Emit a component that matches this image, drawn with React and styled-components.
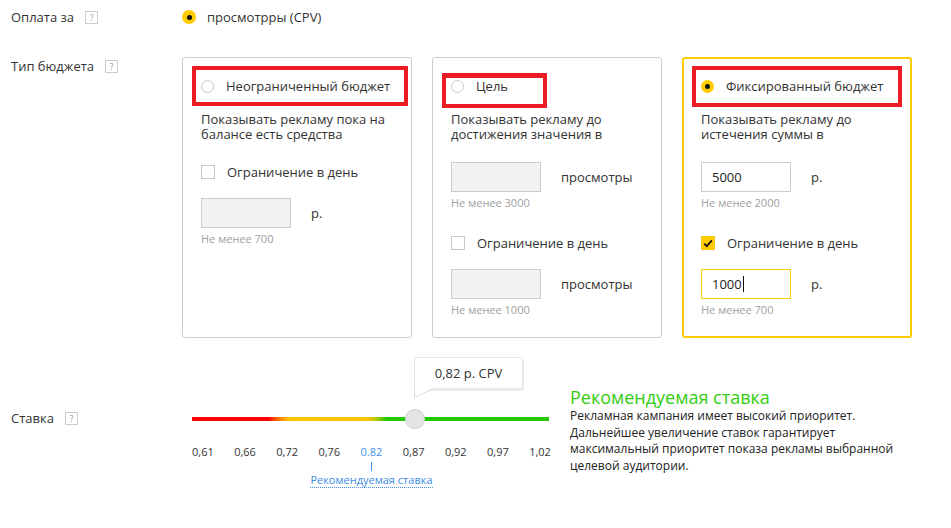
import React from 'react';
import styled, { createGlobalStyle } from 'styled-components';

const Global = createGlobalStyle`
  html, body { margin: 0; padding: 0; background: #fff; }
  body {
    font-family: "Open Sans", "Liberation Sans", sans-serif;
    font-size: 13px;
    color: #333;
  }
`;

const Page = styled.div`
  width: 951px;
  height: 528px;
  box-sizing: border-box;
  padding: 8px 0 0 11px;
  display: flex;
  flex-direction: column;
  overflow: hidden;
`;

const Row = styled.div`
  display: flex;
  align-items: flex-start;
  margin-top: ${p => p.$mt || 0}px;
`;

const LabelCell = styled.div`
  width: 171px;
  flex: none;
  display: flex;
  align-items: center;
  height: 18px;
  line-height: 18px;
  margin-top: ${p => p.$mt || 0}px;
`;

const HelpBox = styled.span`
  margin-left: 11px;
  width: 13px;
  height: 13px;
  box-sizing: border-box;
  border: 1px solid #ccc;
  display: inline-flex;
  align-items: center;
  justify-content: center;
  font-size: 9px;
  color: #999;
  line-height: 1;
`;

const OptionLine = styled.label`
  display: flex;
  align-items: center;
  height: 18px;
  gap: ${p => p.$gap || 12}px;
  line-height: 18px;
  white-space: nowrap;
`;

const Radio = styled.span`
  width: ${p => p.$size || 13}px;
  height: ${p => p.$size || 13}px;
  box-sizing: border-box;
  border-radius: 50%;
  flex: none;
  display: inline-flex;
  align-items: center;
  justify-content: center;
  background: ${p => (p.$checked ? '#ffcc00' : '#fff')};
  border: ${p => (p.$checked ? 'none' : '1px solid #c8c8c8')};
  &::after {
    content: '';
    display: ${p => (p.$checked ? 'block' : 'none')};
    width: 5px;
    height: 5px;
    border-radius: 50%;
    background: #111;
  }
`;

const Cards = styled.div`
  display: flex;
  gap: 20px;
`;

const Card = styled.div`
  position: relative;
  width: 230px;
  height: 281px;
  box-sizing: border-box;
  border-radius: 3px;
  border: ${p => (p.$active ? '2px solid #ffcc00' : '1px solid #ccc')};
  padding: ${p => (p.$active ? '18px 17px' : '19px 18px')};
  display: flex;
  flex-direction: column;
  align-items: flex-start;
`;

const Annotation = styled.div`
  position: absolute;
  left: ${p => p.$l}px;
  top: ${p => p.$t}px;
  width: ${p => p.$w}px;
  height: ${p => p.$h}px;
  box-sizing: border-box;
  border: 4px solid #ec1c24;
  border-top-width: ${p => p.$bt || 4}px;
  pointer-events: none;
`;

const Desc = styled.div`
  margin-top: 17px;
  line-height: 15px;
  white-space: nowrap;
`;

const CheckLine = styled(OptionLine)`
  margin-top: ${p => p.$mt}px;
`;

const Checkbox = styled.span`
  width: 14px;
  height: 14px;
  box-sizing: border-box;
  flex: none;
  display: inline-flex;
  align-items: center;
  justify-content: center;
  background: ${p => (p.$checked ? '#ffcc00' : '#fff')};
  border: ${p => (p.$checked ? 'none' : '1px solid #c8c8c8')};
`;

const InputRow = styled.div`
  margin-top: ${p => p.$mt}px;
  display: flex;
  align-items: center;
  gap: 20px;
`;

const Field = styled.div`
  width: 90px;
  height: 30px;
  box-sizing: border-box;
  border: 1px solid ${p => (p.$focus ? '#ffcc00' : '#ccc')};
  background: ${p => (p.$disabled ? '#f2f2f2' : '#fff')};
  padding-left: 10px;
  display: flex;
  align-items: center;
  color: #222;
`;

const Caret = styled.span`
  display: inline-block;
  width: 1px;
  height: 16px;
  background: #111;
  margin-left: 1px;
`;

const Unit = styled.span`
  line-height: 18px;
`;

const Hint = styled.div`
  margin-top: 4px;
  font-size: 11px;
  line-height: 14px;
  color: #a0a0a0;
`;

const SliderBlock = styled.div`
  position: relative;
  margin-left: 10px;
  width: 359px;
  padding-top: 52px;
  flex: none;
`;

const Tooltip = styled.div`
  position: absolute;
  left: 222px;
  top: 0;
  width: 109px;
  height: 32px;
  box-sizing: border-box;
  background: #fff;
  border: 1px solid #e6e6e6;
  border-radius: 3px;
  border-bottom-left-radius: 0;
  box-shadow: 1px 2px 0 #ececec;
  display: flex;
  align-items: center;
  justify-content: center;
  color: #333;
`;

const TooltipTail = styled.svg`
  position: absolute;
  left: -1px;
  top: 30px;
  overflow: visible;
`;

const TrackWrap = styled.div`
  position: relative;
  height: 20px;
  display: flex;
  align-items: center;
`;

const Track = styled.div`
  width: 357px;
  height: 4px;
  background: linear-gradient(
    to right,
    #ff0000 0%,
    #ff0000 21.5%,
    #ff3300 22.5%,
    #ff6a00 24%,
    #ffa800 26%,
    #ffc400 27.5%,
    #f9c400 49%,
    #b6c800 51.5%,
    #22c900 54.5%,
    #22c900 100%
  );
`;

const Thumb = styled.div`
  position: absolute;
  top: 0;
  left: calc(${p => p.$pos}% - 10px);
  width: 20px;
  height: 20px;
  box-sizing: border-box;
  border-radius: 50%;
  background: #e4e4e4;
  border: 1px solid #cfcfcf;
`;

const Ticks = styled.div`
  margin-top: 15px;
  display: flex;
  justify-content: space-between;
  font-size: 11px;
  line-height: 16px;
  color: #333;
`;

const TickLabel = styled.span`
  position: relative;
  color: ${p => (p.$rec ? '#3d8de6' : '#333')};
`;

const Marker = styled.span`
  position: absolute;
  left: 50%;
  top: 18px;
  width: 1px;
  height: 9px;
  background: #3d8de6;
`;

const RecLink = styled.a`
  position: absolute;
  left: 50%;
  top: 29px;
  transform: translateX(-50%);
  white-space: nowrap;
  color: #3d8de6;
  font-size: 11px;
  line-height: 14px;
  text-decoration: none;
  border-bottom: 1px dotted #3d8de6;
`;

const RecBlock = styled.div`
  margin-left: 19px;
  margin-top: 29px;
`;

const RecTitle = styled.div`
  font-size: 18px;
  line-height: 22px;
  color: #33cc11;
`;

const RecText = styled.div`
  font-size: 12px;
  line-height: 16.5px;
  color: #222;
  white-space: nowrap;
`;

const Check = () => (
  <svg width="10" height="9" viewBox="0 0 10 9">
    <path d="M1.2 4.6 L3.8 7.2 L8.8 1.3" fill="none" stroke="#111" strokeWidth="1.8" />
  </svg>
);

const ticks = ['0,61', '0,66', '0,72', '0,76', '0.82', '0,87', '0,92', '0,97', '1,02'];

export default function App() {
  return (
    <Page>
      <Global />
      <Row>
        <LabelCell>
          Оплата за<HelpBox>?</HelpBox>
        </LabelCell>
        <OptionLine $gap={11}>
          <Radio $checked $size={14} />
          просмотрры (CPV)
        </OptionLine>
      </Row>

      <Row $mt={31}>
        <LabelCell>
          Тип бюджета<HelpBox>?</HelpBox>
        </LabelCell>
        <Cards>
          <Card>
            <OptionLine>
              <Radio />
              Неограниченный бюджет
            </OptionLine>
            <Desc>
              Показывать рекламу пока на
              <br />
              балансе есть средства
            </Desc>
            <CheckLine $mt={21}>
              <Checkbox />
              Ограничение в день
            </CheckLine>
            <InputRow $mt={17}>
              <Field $disabled />
              <Unit>р.</Unit>
            </InputRow>
            <Hint>Не менее 700</Hint>
            <Annotation $l={9} $t={8} $w={216} $h={40} />
          </Card>

          <Card>
            <OptionLine>
              <Radio />
              Цель
            </OptionLine>
            <Desc>
              Показывать рекламу до
              <br />
              достижения значения в
            </Desc>
            <InputRow $mt={20}>
              <Field $disabled />
              <Unit>просмотры</Unit>
            </InputRow>
            <Hint>Не менее 3000</Hint>
            <CheckLine $mt={24}>
              <Checkbox />
              Ограничение в день
            </CheckLine>
            <InputRow $mt={17}>
              <Field $disabled />
              <Unit>просмотры</Unit>
            </InputRow>
            <Hint>Не менее 1000</Hint>
            <Annotation $l={9} $t={15} $w={105} $h={35} $bt={5} />
          </Card>

          <Card $active>
            <OptionLine>
              <Radio $checked />
              Фиксированный бюджет
            </OptionLine>
            <Desc>
              Показывать рекламу до
              <br />
              истечения суммы в
            </Desc>
            <InputRow $mt={20}>
              <Field>5000</Field>
              <Unit>р.</Unit>
            </InputRow>
            <Hint>Не менее 2000</Hint>
            <CheckLine $mt={24}>
              <Checkbox $checked>
                <Check />
              </Checkbox>
              Ограничение в день
            </CheckLine>
            <InputRow $mt={17}>
              <Field $focus>
                1000
                <Caret />
              </Field>
              <Unit>р.</Unit>
            </InputRow>
            <Hint>Не менее 700</Hint>
            <Annotation $l={8} $t={7} $w={210} $h={41} />
          </Card>
        </Cards>
      </Row>

      <Row $mt={19}>
        <LabelCell $mt={52}>
          Ставка<HelpBox>?</HelpBox>
        </LabelCell>
        <SliderBlock>
          <Tooltip>
            0,82 р. CPV
            <TooltipTail width="20" height="10" viewBox="0 0 20 10">
              <polygon points="0.5,0 19,0 0.5,9.5" fill="#fff" />
              <polyline points="0.5,0 0.5,9.5 19,1" fill="none" stroke="#dcdcdc" strokeWidth="1" />
            </TooltipTail>
          </Tooltip>
          <TrackWrap>
            <Track />
            <Thumb $pos={62.2} />
          </TrackWrap>
          <Ticks>
            {ticks.map(t => (
              <TickLabel key={t} $rec={t === '0.82'}>
                {t}
                {t === '0.82' && (
                  <>
                    <Marker />
                    <RecLink>Рекомендуемая ставка</RecLink>
                  </>
                )}
              </TickLabel>
            ))}
          </Ticks>
        </SliderBlock>
        <RecBlock>
          <RecTitle>Рекомендуемая ставка</RecTitle>
          <RecText>
            Рекламная кампания имеет высокий приоритет.
            <br />
            Дальнейшее увеличение ставок гарантирует
            <br />
            максимальный приоритет показа рекламы выбранной
            <br />
            целевой аудитории.
          </RecText>
        </RecBlock>
      </Row>
    </Page>
  );
}
